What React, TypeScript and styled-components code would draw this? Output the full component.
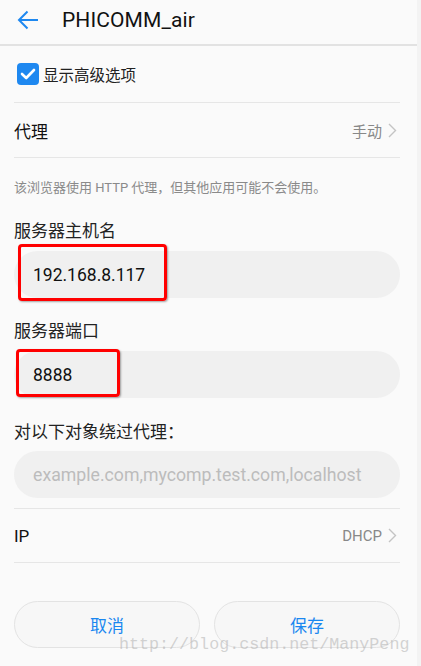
import React from "react";
import styled, { createGlobalStyle } from "styled-components";

const GlobalStyle = createGlobalStyle`
  html, body { margin: 0; padding: 0; background: #fafafa; }
  body { font-family: Roboto, "Noto Sans CJK SC", sans-serif; }
  * { box-sizing: border-box; }
`;

const Page = styled.div`
  position: relative;
  width: 421px;
  height: 666px;
  background: #fafafa;
  border-right: 4px solid #f3f3f3;
  overflow: hidden;
`;

const Header = styled.header`
  height: 46px;
  display: flex;
  align-items: center;
  padding-left: 16px;
  border-bottom: 2px solid #e2e2e2;
  padding-bottom: 4px;
`;

const BackButton = styled.div`
  width: 24px;
  height: 24px;
  display: flex;
  align-items: center;
  justify-content: center;
  margin-right: 22px;
`;

const Title = styled.h1`
  margin: 0;
  font-family: Roboto, sans-serif;
  font-weight: 400;
  font-size: 21px;
  color: #111;
  letter-spacing: 0.1px;
`;

const Content = styled.div`
  padding: 0 17px 0 14px;
`;

const CheckRow = styled.div`
  height: 57px;
  display: flex;
  align-items: center;
  gap: 4px;
  padding-left: 3px;
  border-bottom: 1px solid #e6e6e6;
`;

const CheckBox = styled.div`
  width: 22px;
  height: 22px;
  border-radius: 4px;
  background: #1e88f0;
  display: flex;
  align-items: center;
  justify-content: center;
`;

const CheckLabel = styled.span`
  font-size: 15.5px;
  color: #222;
`;

const ListRow = styled.div<{ $topLine?: boolean }>`
  height: 55px;
  display: flex;
  align-items: center;
  justify-content: space-between;
  border-bottom: 1px solid #e6e6e6;
  ${(p) => (p.$topLine ? "border-top: 1px solid #e6e6e6;" : "")}
`;

const RowTitle = styled.span`
  font-size: 17px;
  color: #111;
`;

const RowValue = styled.span`
  display: flex;
  align-items: center;
  gap: 6px;
  padding-right: 3px;
  font-size: 15px;
  color: #888;
`;

const Note = styled.p`
  margin: 21px 0 0;
  font-size: 13px;
  line-height: 18px;
  color: #8a8a8a;
`;

const FieldLabel = styled.div<{ $top: number }>`
  margin-top: ${(p) => p.$top}px;
  font-size: 17px;
  line-height: 24px;
  color: #222;
`;

const InputBox = styled.div<{ $top: number; $placeholder?: boolean }>`
  position: relative;
  margin-top: ${(p) => p.$top}px;
  height: 47px;
  border-radius: 24px;
  background: #f0f0f0;
  display: flex;
  align-items: center;
  padding-left: 19px;
  font-family: Roboto, sans-serif;
  font-size: ${(p) => (p.$placeholder ? "17.7px" : "17.5px")};
  color: ${(p) => (p.$placeholder ? "#bcbcbc" : "#111")};
`;

const Highlight = styled.div<{ $l: number; $t: number; $w: number; $h: number }>`
  position: absolute;
  left: ${(p) => p.$l}px;
  top: ${(p) => p.$t}px;
  width: ${(p) => p.$w}px;
  height: ${(p) => p.$h}px;
  border: 3px solid #ff0000;
  border-radius: 4px;
  box-shadow: 1px 1px 2px rgba(0, 0, 0, 0.35);
`;

const Spacer = styled.div<{ $h: number }>`
  height: ${(p) => p.$h}px;
`;

const ButtonBar = styled.div`
  display: grid;
  grid-template-columns: 1fr 1fr;
  gap: 14px;
  margin-top: 38px;
`;

const ActionButton = styled.button`
  height: 47px;
  border-radius: 24px;
  border: 1px solid #e3e3e3;
  background: #f7f7f7;
  color: #1a87f0;
  font-family: "Noto Sans CJK SC", sans-serif;
  font-size: 17px;
`;

const Watermark = styled.div`
  position: absolute;
  left: 119px;
  top: 635px;
  font-family: "Liberation Mono", monospace;
  font-size: 16.7px;
  color: rgba(170, 170, 170, 0.5);
  white-space: nowrap;
  pointer-events: none;
`;

const Chevron = () => (
  <svg width="9" height="15" viewBox="0 0 9 15">
    <path d="M1 1 L7.5 7.5 L1 14" fill="none" stroke="#c4c4c4" strokeWidth="1.4" />
  </svg>
);

export default function App() {
  return (
    <Page>
      <GlobalStyle />
      <Header>
        <BackButton>
          <svg width="22" height="20" viewBox="0 0 22 20">
            <path d="M21 10 H2 M10.5 1.5 L2 10 L10.5 18.5" fill="none" stroke="#1e88f0" strokeWidth="2" />
          </svg>
        </BackButton>
        <Title>PHICOMM_air</Title>
      </Header>
      <Content>
        <CheckRow>
          <CheckBox>
            <svg width="16" height="12" viewBox="0 0 16 12">
              <path d="M2 6 L6.2 10 L14 2" fill="none" stroke="#fff" strokeWidth="2.6" strokeLinecap="round" strokeLinejoin="round" />
            </svg>
          </CheckBox>
          <CheckLabel>显示高级选项</CheckLabel>
        </CheckRow>
        <ListRow>
          <RowTitle>代理</RowTitle>
          <RowValue>
            手动
            <Chevron />
          </RowValue>
        </ListRow>
        <Note>该浏览器使用 HTTP 代理，但其他应用可能不会使用。</Note>

        <FieldLabel $top={22}>服务器主机名</FieldLabel>
        <InputBox $top={8}>
          192.168.8.117
          <Highlight $l={4} $t={-7} $w={149} $h={57} />
        </InputBox>

        <FieldLabel $top={21}>服务器端口</FieldLabel>
        <InputBox $top={8}>
          8888
          <Highlight $l={2} $t={-2} $w={104} $h={48} />
        </InputBox>

        <FieldLabel $top={22}>对以下对象绕过代理：</FieldLabel>
        <InputBox $top={7} $placeholder>
          example.com,mycomp.test.com,localhost
        </InputBox>
        <Spacer $h={10} />
        <ListRow $topLine>
          <RowTitle>IP</RowTitle>
          <RowValue>
            DHCP
            <Chevron />
          </RowValue>
        </ListRow>

        <ButtonBar>
          <ActionButton>取消</ActionButton>
          <ActionButton>保存</ActionButton>
        </ButtonBar>
      </Content>
      <Watermark>http://blog.csdn.net/ManyPeng</Watermark>
    </Page>
  );
}
